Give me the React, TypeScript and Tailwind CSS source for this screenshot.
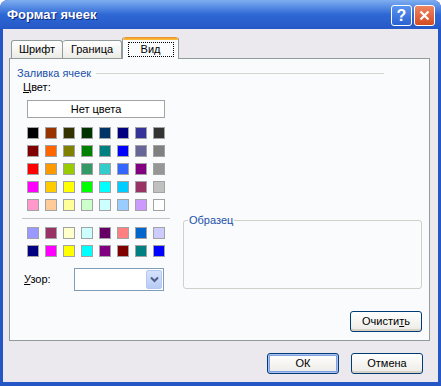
import React from "react";

const ROW_A = [
  ["#000000", "#993300", "#333300", "#003300", "#003366", "#000080", "#333399", "#333333"],
  ["#800000", "#FF6600", "#808000", "#008000", "#008080", "#0000FF", "#666699", "#808080"],
  ["#FF0000", "#FF9900", "#99CC00", "#339966", "#33CCCC", "#3366FF", "#800080", "#969696"],
  ["#FF00FF", "#FFCC00", "#FFFF00", "#00FF00", "#00FFFF", "#00CCFF", "#993366", "#C0C0C0"],
  ["#FF99CC", "#FFCC99", "#FFFF99", "#CCFFCC", "#CCFFFF", "#99CCFF", "#CC99FF", "#FFFFFF"],
];

const ROW_B = [
  ["#9999FF", "#993366", "#FFFFCC", "#CCFFFF", "#660066", "#FF8080", "#0066CC", "#CCCCFF"],
  ["#000080", "#FF00FF", "#FFFF00", "#00FFFF", "#800080", "#800000", "#008080", "#0000FF"],
];

const Swatches = ({ rows }: { rows: string[][] }) => (
  <div className="grid grid-cols-[repeat(8,12px)] gap-[6px]">
    {rows.flat().map((c, i) => (
      <div key={i} className="h-[12px] w-[12px] border border-[#A3A3A3]" style={{ backgroundColor: c }} />
    ))}
  </div>
);

const XpButton = ({ children, isDefault }: { children: React.ReactNode; isDefault?: boolean }) => (
  <button
    className={`flex h-[21px] w-[72px] items-center justify-center rounded-[3px] border border-[#003C74] bg-linear-to-b from-white to-[#ECEBE6] text-[11px] leading-none text-black ${
      isDefault
        ? "shadow-[inset_0_0_0_1px_#A9C2F0,inset_0_0_0_2px_#7FA0E4]"
        : "shadow-[inset_0_-2px_0_#D8D2C6]"
    }`}
  >
    {children}
  </button>
);

export default function App() {
  return (
    <div className="flex h-[386px] w-[441px] flex-col rounded-t-[8px] bg-[#2556C6] font-['Liberation_Sans',Arial,sans-serif] text-[11px] text-black">
      {/* Title bar */}
      <div className="flex h-[29px] shrink-0 items-center rounded-t-[8px] bg-linear-to-b from-[#7FAEF0] via-[#2E68D4] to-[#2558C6] pl-[7px] pr-[6px]">
        <span className="text-[13px] font-bold text-white [text-shadow:1px_1px_0_#0B2A80]">Формат ячеек</span>
        <div className="ml-auto flex gap-[2px] pt-[2px]">
          <div className="flex h-[21px] w-[21px] items-center justify-center rounded-[3px] border border-white bg-linear-to-b from-[#5B94F0] to-[#2B62D2] text-[16px] font-bold leading-none text-white">
            ?
          </div>
          <div className="flex h-[21px] w-[21px] items-center justify-center rounded-[3px] border border-white bg-linear-to-b from-[#EE8560] to-[#D44A1E]">
            <svg width="11" height="11" viewBox="0 0 11 11">
              <path d="M1.5 1.5 L9.5 9.5 M9.5 1.5 L1.5 9.5" stroke="white" strokeWidth="2.2" />
            </svg>
          </div>
        </div>
      </div>

      {/* Body */}
      <div className="mx-[3px] mb-[4px] flex flex-1 flex-col bg-[#EBE9ED] pl-[6px] pr-[7px] pt-[8px]">
        {/* Tabs */}
        <div className="relative z-10 -mb-px flex h-[22px] items-end pl-[2px]">
          <div className="mb-[1px] flex h-[18px] w-[52px] items-center justify-center rounded-t-[3px] border border-b-0 border-[#919B9C] bg-linear-to-b from-white to-[#ECECE6]">
            Шрифт
          </div>
          <div className="mb-[1px] flex h-[18px] w-[59px] items-center justify-center rounded-t-[3px] border border-b-0 border-l-0 border-[#919B9C] bg-linear-to-b from-white to-[#ECECE6]">
            Граница
          </div>
          <div className="flex h-[22px] w-[57px] flex-col rounded-t-[3px] border-x border-[#919B9C] bg-[#FAFBFD]">
            <div className="h-[3px] rounded-t-[3px] bg-linear-to-b from-[#E68B2C] to-[#FFC73C]" />
            <div className="mx-auto mt-[2px] flex h-[15px] w-[46px] items-center justify-center border border-dotted border-black">
              Вид
            </div>
          </div>
        </div>

        {/* Panel */}
        <div className="flex h-[283px] w-[421px] flex-col border border-[#919B9C] bg-[#FAFBFD]">
          <div className="mt-[8px] flex h-[13px] items-center pl-[7px]">
            <span className="leading-[13px] text-[#2151A8]">Заливка ячеек</span>
            <div className="ml-[5px] h-px w-[288px] bg-[#D5D5CF]" />
          </div>

          <div className="flex pl-[12px]">
            {/* Left column */}
            <div className="flex w-[148px] flex-col">
              <div className="ml-[1px] mt-[1px] leading-[13px]">
                <span className="underline underline-offset-[1px]">Ц</span>вет:
              </div>
              <div className="ml-[5px] mt-[6px] flex h-[18px] w-[138px] items-center justify-center border border-[#A3A3A3] bg-white">
                Нет цвета
              </div>
              <div className="ml-[5px] mt-[9px]">
                <Swatches rows={ROW_A} />
              </div>
              <div className="mt-[7px] h-px w-[148px] bg-[#C4C4C4]" />
              <div className="ml-[5px] mt-[8px]">
                <Swatches rows={ROW_B} />
              </div>
              <div className="mt-[11px] flex items-center">
                <span className="ml-[2px] w-[50px] leading-[13px]">
                  <span className="underline underline-offset-[1px]">У</span>зор:
                </span>
                <div className="flex h-[23px] w-[90px] items-stretch justify-end border border-[#7F9DB9] bg-white p-[1px]">
                  <div className="flex w-[16px] items-center justify-center rounded-[2px] border border-[#B6C8F2] bg-linear-to-b from-[#D6E2FC] to-[#B7CBF5]">
                    <svg width="9" height="7" viewBox="0 0 9 7">
                      <path d="M1 1.5 L4.5 5 L8 1.5" stroke="#4D6185" strokeWidth="2" fill="none" />
                    </svg>
                  </div>
                </div>
              </div>
            </div>

            {/* Right column */}
            <div className="ml-[13px] mt-[140px]">
              <div className="relative h-[69px] w-[239px] rounded-[3px] border border-[#D0D0CA]">
                <span className="absolute -top-[7px] left-[4px] bg-[#FAFBFD] px-[1px] leading-[13px] text-[#2151A8]">
                  Образец
                </span>
              </div>
            </div>
          </div>

          <div className="mt-[20px] flex justify-end pr-[7px]">
            <XpButton>
              Очисти<span className="underline underline-offset-[1px]">т</span>ь
            </XpButton>
          </div>
        </div>

        {/* Dialog buttons */}
        <div className="mt-[12px] flex justify-end gap-[12px] pr-[8px]">
          <XpButton isDefault>ОК</XpButton>
          <XpButton>Отмена</XpButton>
        </div>
      </div>
    </div>
  );
}
